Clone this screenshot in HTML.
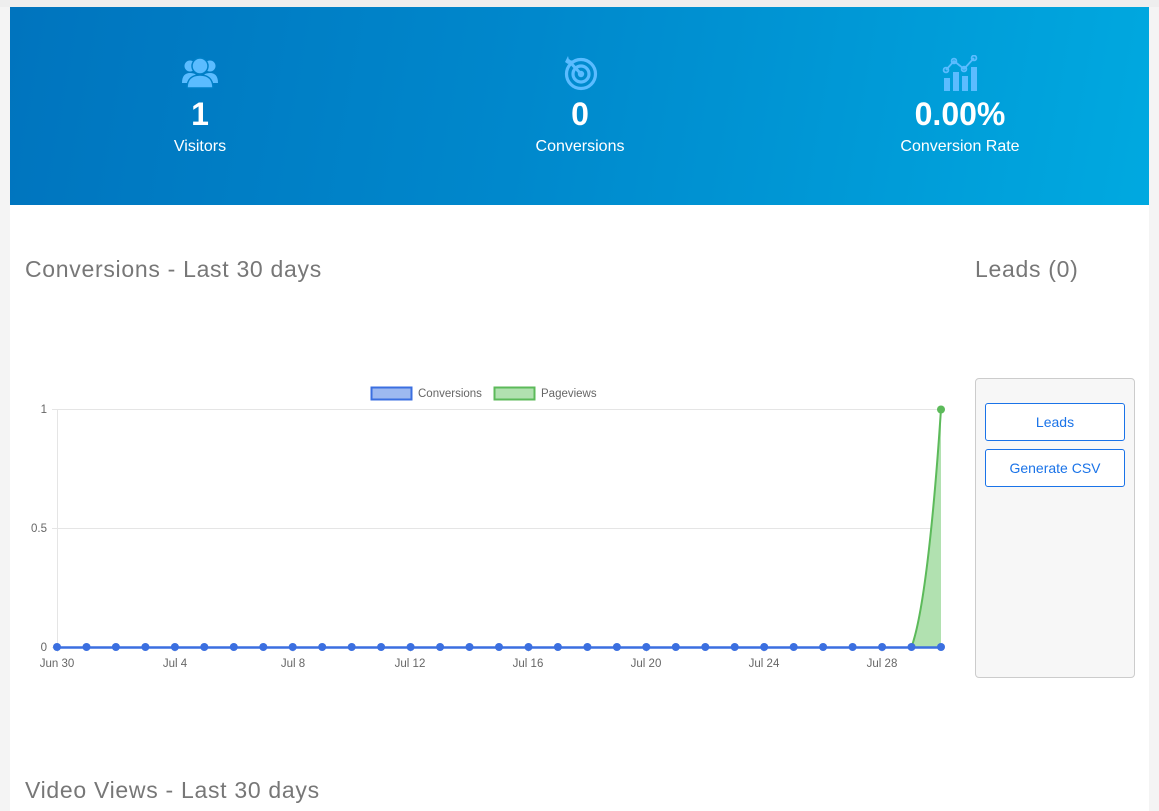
<!DOCTYPE html>
<html><head><meta charset="utf-8"><style>
body{margin:0;width:1159px;height:811px;background:#f4f4f4;overflow:hidden;font-family:"Liberation Sans",sans-serif;position:relative}
.topbar{position:absolute;left:0;top:0;width:1159px;height:7px;background:#eeeeee}
.panel{position:absolute;left:10px;top:7px;width:1139px;height:804px;background:#fff}
.banner{position:absolute;left:10px;top:7px;width:1139px;height:198px;background:linear-gradient(100deg,#0074be 0%,#0088cc 45%,#00a9e0 100%)}
.stat{position:absolute;top:0;width:300px;text-align:center;color:#fff}
.stat .n{position:absolute;top:89px;width:100%;font-size:32px;font-weight:bold}
.stat .l{position:absolute;top:131px;width:100%;font-size:16px}
.stat svg{position:absolute;top:48px;left:132px}
h2{position:absolute;margin:0;font-weight:normal;color:#777;font-size:23px;letter-spacing:0.7px}
.side{position:absolute;left:975px;top:378px;width:158px;height:298px;background:#f7f7f7;border:1px solid #ccc;border-radius:4px}
.btn{position:absolute;left:9px;width:138px;height:36px;border:1px solid #1a73e8;border-radius:3px;background:#fff;color:#1a73e8;font-size:14px;text-align:center;line-height:36px}
</style></head><body>
<div class="topbar"></div>
<div class="panel"></div>
<div class="banner">
 <div class="stat" style="left:40px">
  <svg width="36" height="32" viewBox="0 0 36 32" style="top:50px"><g fill="#5bbcff"><circle cx="8" cy="9" r="5.5"/><circle cx="28" cy="9" r="5.5"/><path d="M0 26c0-7 3-10 8-10s6 2 6 2v8z"/><path d="M36 26c0-7-3-10-8-10s-6 2-6 2v8z"/><circle cx="18" cy="9" r="8" stroke="#0080c8" stroke-width="1.5"/><path d="M5 31c0-9 5-13 13-13s13 4 13 13z" stroke="#0080c8" stroke-width="1.5"/></g></svg>
  <div class="n">1</div><div class="l">Visitors</div></div>
 <div class="stat" style="left:420px">
  <svg width="36" height="36" viewBox="0 0 36 36"><g fill="none" stroke="#5bbcff" stroke-width="3.2"><circle cx="19" cy="19" r="14.5"/><circle cx="19" cy="19" r="8"/></g><circle cx="19" cy="19" r="3.2" fill="#5bbcff"/><path d="M19 19L6 5" stroke="#5bbcff" stroke-width="3"/><path d="M3 7l3-6 1 4 5 1-6 3z" fill="#5bbcff"/></svg>
  <div class="n">0</div><div class="l">Conversions</div></div>
 <div class="stat" style="left:800px">
  <svg width="36" height="36" viewBox="0 0 36 36"><g fill="#5bbcff"><rect x="2" y="23" width="6" height="13"/><rect x="11" y="17" width="6" height="19"/><rect x="20" y="21" width="6" height="15"/><rect x="29" y="12" width="6" height="24"/></g><path d="M4 15L12 6 22 14 32 3" fill="none" stroke="#5bbcff" stroke-width="1.8"/><g fill="none" stroke="#5bbcff" stroke-width="1.8"><circle cx="4" cy="15" r="2.4"/><circle cx="12" cy="6" r="2.4"/><circle cx="22" cy="14" r="2.4"/><circle cx="32" cy="3" r="2.4"/></g></svg>
  <div class="n">0.00%</div><div class="l">Conversion Rate</div></div>
</div>
<h2 style="left:25px;top:256px">Conversions - Last 30 days</h2>
<h2 style="left:975px;top:256px">Leads (0)</h2>
<h2 style="left:25px;top:777px">Video Views - Last 30 days</h2>
<div class="side"><div class="btn" style="top:24px">Leads</div><div class="btn" style="top:70px">Generate CSV</div></div>
<svg style="position:absolute;left:0;top:0" width="970" height="690">
 <g stroke="#e5e5e5" stroke-width="1">
  <line x1="52" y1="409.5" x2="941" y2="409.5"/><line x1="52" y1="528.5" x2="941" y2="528.5"/><line x1="52" y1="647.5" x2="941" y2="647.5"/>
  <line x1="57.5" y1="409" x2="57.5" y2="652"/>
  <line x1="175" y1="647" x2="175" y2="652"/><line x1="293" y1="647" x2="293" y2="652"/><line x1="410.5" y1="647" x2="410.5" y2="652"/><line x1="528.5" y1="647" x2="528.5" y2="652"/><line x1="646.5" y1="647" x2="646.5" y2="652"/><line x1="764" y1="647" x2="764" y2="652"/><line x1="882" y1="647" x2="882" y2="652"/>
 </g>
 <g font-family="Liberation Sans,sans-serif" font-size="11.5" fill="#666">
  <text x="47" y="413" text-anchor="end">1</text><text x="47" y="532" text-anchor="end">0.5</text><text x="47" y="651" text-anchor="end">0</text>
  <g text-anchor="middle"><text x="57" y="667">Jun 30</text><text x="175" y="667">Jul 4</text><text x="293" y="667">Jul 8</text><text x="410" y="667">Jul 12</text><text x="528" y="667">Jul 16</text><text x="646" y="667">Jul 20</text><text x="764" y="667">Jul 24</text><text x="882" y="667">Jul 28</text></g>
  <text x="418" y="397">Conversions</text><text x="541" y="397">Pageviews</text>
 </g>
 <rect x="371.5" y="387.5" width="40" height="12" fill="#9db9f0" stroke="#3b6fe0" stroke-width="2"/>
 <rect x="494.5" y="387.5" width="40" height="12" fill="#b1e1b0" stroke="#5cba5a" stroke-width="2"/>
 <path d="M911.5 647 C925 610 935 500 941 409 L941 647 Z" fill="#b1e1b0"/>
 <path d="M911.5 647 C925 610 935 500 941 409" fill="none" stroke="#5cba5a" stroke-width="2"/>
 <line x1="57" y1="647.5" x2="941" y2="647.5" stroke="#3b6fe0" stroke-width="2.5"/>
 <g fill="#3b6fe0">
  <circle cx="57" cy="647" r="4"/><circle cx="86.5" cy="647" r="4"/><circle cx="115.9" cy="647" r="4"/><circle cx="145.4" cy="647" r="4"/><circle cx="174.9" cy="647" r="4"/><circle cx="204.3" cy="647" r="4"/><circle cx="233.8" cy="647" r="4"/><circle cx="263.3" cy="647" r="4"/><circle cx="292.7" cy="647" r="4"/><circle cx="322.2" cy="647" r="4"/><circle cx="351.7" cy="647" r="4"/><circle cx="381.1" cy="647" r="4"/><circle cx="410.6" cy="647" r="4"/><circle cx="440.1" cy="647" r="4"/><circle cx="469.5" cy="647" r="4"/><circle cx="499" cy="647" r="4"/><circle cx="528.5" cy="647" r="4"/><circle cx="557.9" cy="647" r="4"/><circle cx="587.4" cy="647" r="4"/><circle cx="616.9" cy="647" r="4"/><circle cx="646.3" cy="647" r="4"/><circle cx="675.8" cy="647" r="4"/><circle cx="705.3" cy="647" r="4"/><circle cx="734.7" cy="647" r="4"/><circle cx="764.2" cy="647" r="4"/><circle cx="793.7" cy="647" r="4"/><circle cx="823.1" cy="647" r="4"/><circle cx="852.6" cy="647" r="4"/><circle cx="882.1" cy="647" r="4"/><circle cx="911.5" cy="647" r="4"/><circle cx="941" cy="647" r="4"/>
 </g>
 <circle cx="941" cy="409.5" r="4" fill="#5cba5a"/>
</svg>
</body></html>
